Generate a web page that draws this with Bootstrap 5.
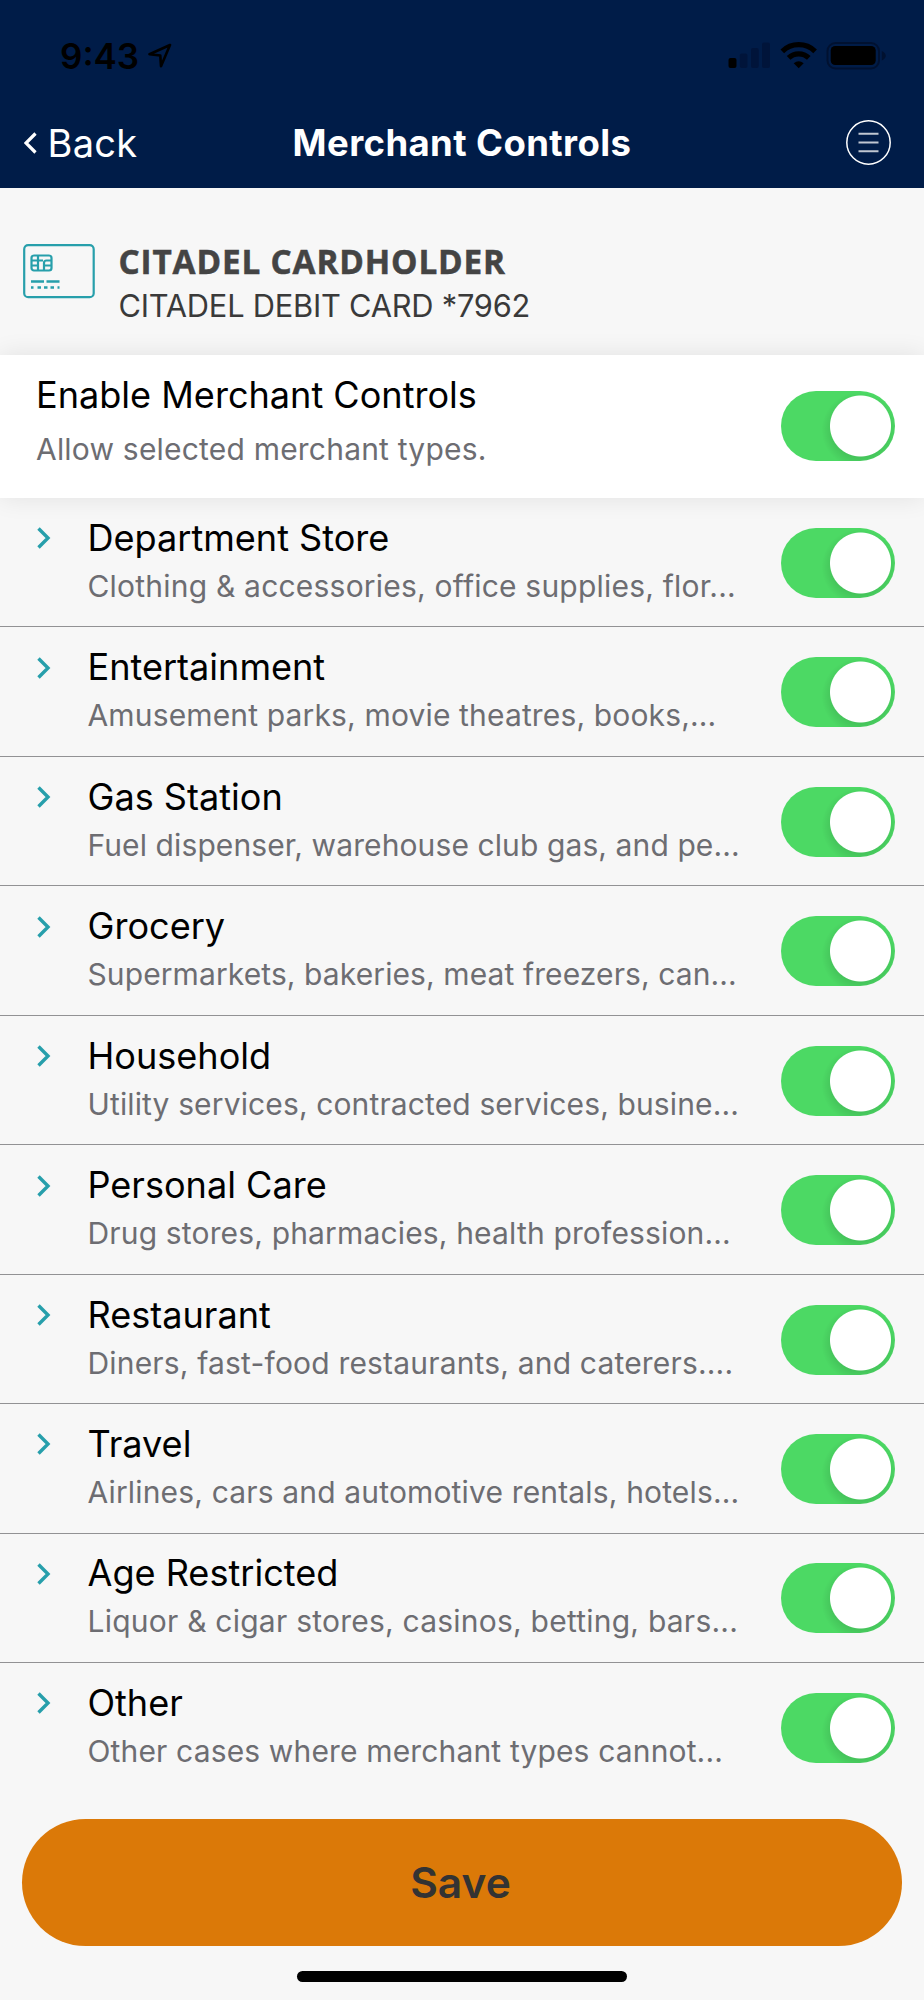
<!DOCTYPE html>
<html lang="en">
<head>
<meta charset="utf-8">
<meta name="viewport" content="width=device-width, initial-scale=1">
<title>Merchant Controls</title>
<link href="https://cdn.jsdelivr.net/npm/bootstrap@5.3.0/dist/css/bootstrap.min.css" rel="stylesheet">
<style>
body{font-family:Inter,"Liberation Sans",sans-serif;background:#f7f7f7;color:#000}
.screen{height:2000px;overflow:hidden}
.topbar{background:#001c48;height:187.5px}
.status{height:92px;padding:42px 37px 0 60px}
.clock{font-size:35px;font-weight:600;line-height:28px;width:88px}
.navrow{height:101px;display:grid;grid-template-columns:1fr auto 1fr;padding:0 24px;align-items:center}
.back{font-size:38px;font-weight:400;line-height:44px;gap:10.5px;letter-spacing:.3px}
.menu-icon{margin-right:9.5px}
.heading{font-size:36.5px;font-weight:700;line-height:44px;color:#fff;margin:0;letter-spacing:.4px}
.account{height:167.5px;padding:56px 0 0 23px;gap:22.5px}
.holder{font-family:"Open Sans","Noto Sans",sans-serif;font-weight:700;font-size:33.3px;line-height:40px;color:#444;margin-top:-3px;letter-spacing:.85px;-webkit-text-stroke:.5px #444}
.acct{font-size:30.8px;font-weight:400;line-height:40px;color:#3a3a3a;margin-top:5px;letter-spacing:-.23px}
.enable{height:143px;background:#fff;padding:18px 29px 0 36px;box-shadow:0 0 24px rgba(0,0,0,.09);position:relative;z-index:1}
.enable .sub{margin-top:14px;letter-spacing:.2px}
.ttl{font-size:36.1px;line-height:44px;font-weight:400}
.sub{font-size:30px;line-height:36px;color:#6d6d72;white-space:nowrap}
.kind{height:129.45px;padding:17.9px 29px 0 36px;border-bottom:1.4px solid #929294}
.kind:last-child{border-bottom-color:transparent}
.chev{margin:11.5px 36.8px 0 .7px}
.form-switch.ios{padding:0;min-height:0;margin:0}
.ios .form-check-input{width:114px;height:70px;margin:0;float:none;border:0;border-radius:35px;box-shadow:none;display:block}
.ios .form-check-input:checked{background:radial-gradient(circle at 79.5px 35px,#fff 30px,rgba(255,255,255,0) 31px),radial-gradient(circle at 78.5px 39px,rgba(0,0,0,.11) 26px,rgba(0,0,0,0) 38px),#4cd964}
.enable .ios{padding-top:18px}
.save{height:127px;margin:26.5px 22px 0;padding:0 3px 0 0;border:0;border-radius:64px;background:#db7908;color:#333;font-size:42.5px;font-weight:600}
.save:hover{background:#db7908;color:#333}
.homebar{width:330px;height:11px;border-radius:6px;background:#000;margin:25px auto 0}
</style>
</head>
<body>
<div class="screen d-flex flex-column">
  <header class="topbar flex-shrink-0">
    <div class="status d-flex align-items-start">
      <span class="clock">9:43</span>
      <svg width="24" height="26" viewBox="0 0 24 26"><path d="M22 3 1.500 12.200l10.800 1.300.7 10.700z" fill="none" stroke="#000" stroke-width="2.600" stroke-linejoin="round"/></svg>
      <svg class="ms-auto" width="160" height="28" viewBox="0 0 160 28">
        <rect x="1.500" y="16" width="8" height="10" rx="2"/>
        <g fill="#00143a"><rect x="12.800" y="11.500" width="7.700" height="14.500" rx="2"/><rect x="24" y="6" width="7.700" height="20" rx="2"/><rect x="35" y=".5" width="8" height="25.500" rx="2"/></g>
        <g fill="none" stroke="#000" stroke-width="5.200"><path d="M55.300 9.300a23.500 23.500 0 0 1 32.800 0"/><path d="M61.600 15.900a14.500 14.500 0 0 1 20.200 0"/></g>
        <path d="M71.700 26.300l-5-5q5-4 10 0z"/>
        <rect x="100.500" y="1" width="51.500" height="25.500" rx="8" fill="none" stroke="#001130" stroke-width="2"/>
        <rect x="103.700" y="4" width="45" height="19" rx="4.500"/>
        <path d="M154.800 9q4 2 4 4.800t-4 4.800z" fill="#001130"/>
      </svg>
    </div>
    <nav class="navrow">
      <a class="back d-flex align-items-center text-white text-decoration-none" href="#"><svg width="13" height="22" viewBox="0 0 13 22"><path d="M11.500 1.500 2 11l9.500 9.500" fill="none" stroke="#fff" stroke-width="3.200"/></svg><span>Back</span></a>
      <h1 class="heading">Merchant Controls</h1>
      <svg class="menu-icon ms-auto" width="45" height="45" viewBox="0 0 45 45" fill="none" stroke="#fff"><circle cx="22.500" cy="22.500" r="21.700" stroke-width="1.500"/><path d="M12.500 13.700h20M12.500 22.500h20M12.500 31.200h20" stroke="#c0c6d1" stroke-width="2"/></svg>
    </nav>
  </header>

  <section class="account d-flex flex-shrink-0">
    <svg width="73" height="55" viewBox="0 0 73 55" fill="none" stroke="#279fab" stroke-width="2.200">
      <rect x="1.200" y="1.200" width="69.500" height="52" rx="4"/>
      <rect x="8.500" y="11.500" width="20" height="15" rx="2.500"/>
      <path d="M8 16.500h6.500M8 21.500h6.500M15 12v14M15 16.500h5M21 26v-7q0-2.500 2.500-2.500H28M21 21.500h7"/>
      <path d="M8 37.500h13M23.500 37.500h13M8 43.500h2.500M14.500 43.500h3.500M21 43.500h3.500M27.500 43.500h3.500M34.500 43.500h2" stroke-width="2.500"/>
    </svg>
    <div><div class="holder">CITADEL CARDHOLDER</div><div class="acct">CITADEL DEBIT CARD *7962</div></div>
  </section>

  <section class="enable d-flex flex-shrink-0">
    <div class="flex-grow-1"><div class="ttl">Enable Merchant Controls</div><div class="sub">Allow selected merchant types.</div></div>
    <div class="form-check form-switch ios"><input class="form-check-input" type="checkbox" role="switch" checked aria-label="Enable Merchant Controls"></div>
  </section>

  <main id="kinds" class="flex-shrink-0"></main>

  <button class="btn save flex-shrink-0" type="button">Save</button>
  <div class="homebar flex-shrink-0"></div>
</div>
<script src="https://cdn.jsdelivr.net/npm/bootstrap@5.3.0/dist/js/bootstrap.bundle.min.js"></script>
<script>
// name, summary, tracking of the summary line in px
const kinds = [
  ["Department Store", "Clothing &amp; accessories, office supplies, flor...", .21],
  ["Entertainment", "Amusement parks, movie theatres, books,...", .15],
  ["Gas Station", "Fuel dispenser, warehouse club gas, and pe...", .1],
  ["Grocery", "Supermarkets, bakeries, meat freezers, can...", .1],
  ["Household", "Utility services, contracted services, busine...", .13],
  ["Personal Care", "Drug stores, pharmacies, health profession...", .16],
  ["Restaurant", "Diners, fast-food restaurants, and caterers....", .18],
  ["Travel", "Airlines, cars and automotive rentals, hotels...", .16],
  ["Age Restricted", "Liquor &amp; cigar stores, casinos, betting, bars...", .23],
  ["Other", "Other cases where merchant types cannot...", .15]
];
document.getElementById("kinds").innerHTML = kinds.map(([name, text, track]) => `
  <div class="kind d-flex align-items-start">
    <svg class="chev flex-shrink-0" width="14" height="22" viewBox="0 0 14 22"><path d="M1.500 1.500 11 11l-9.500 9.500" fill="none" stroke="#279fab" stroke-width="3.400"/></svg>
    <div class="flex-grow-1"><div class="ttl">${name}</div><div class="sub mt-2" style="letter-spacing:${track}px">${text}</div></div>
    <div class="form-check form-switch ios mt-2 pt-1"><input class="form-check-input" type="checkbox" role="switch" checked aria-label="${name}"></div>
  </div>`).join("");
</script>
</body>
</html>
